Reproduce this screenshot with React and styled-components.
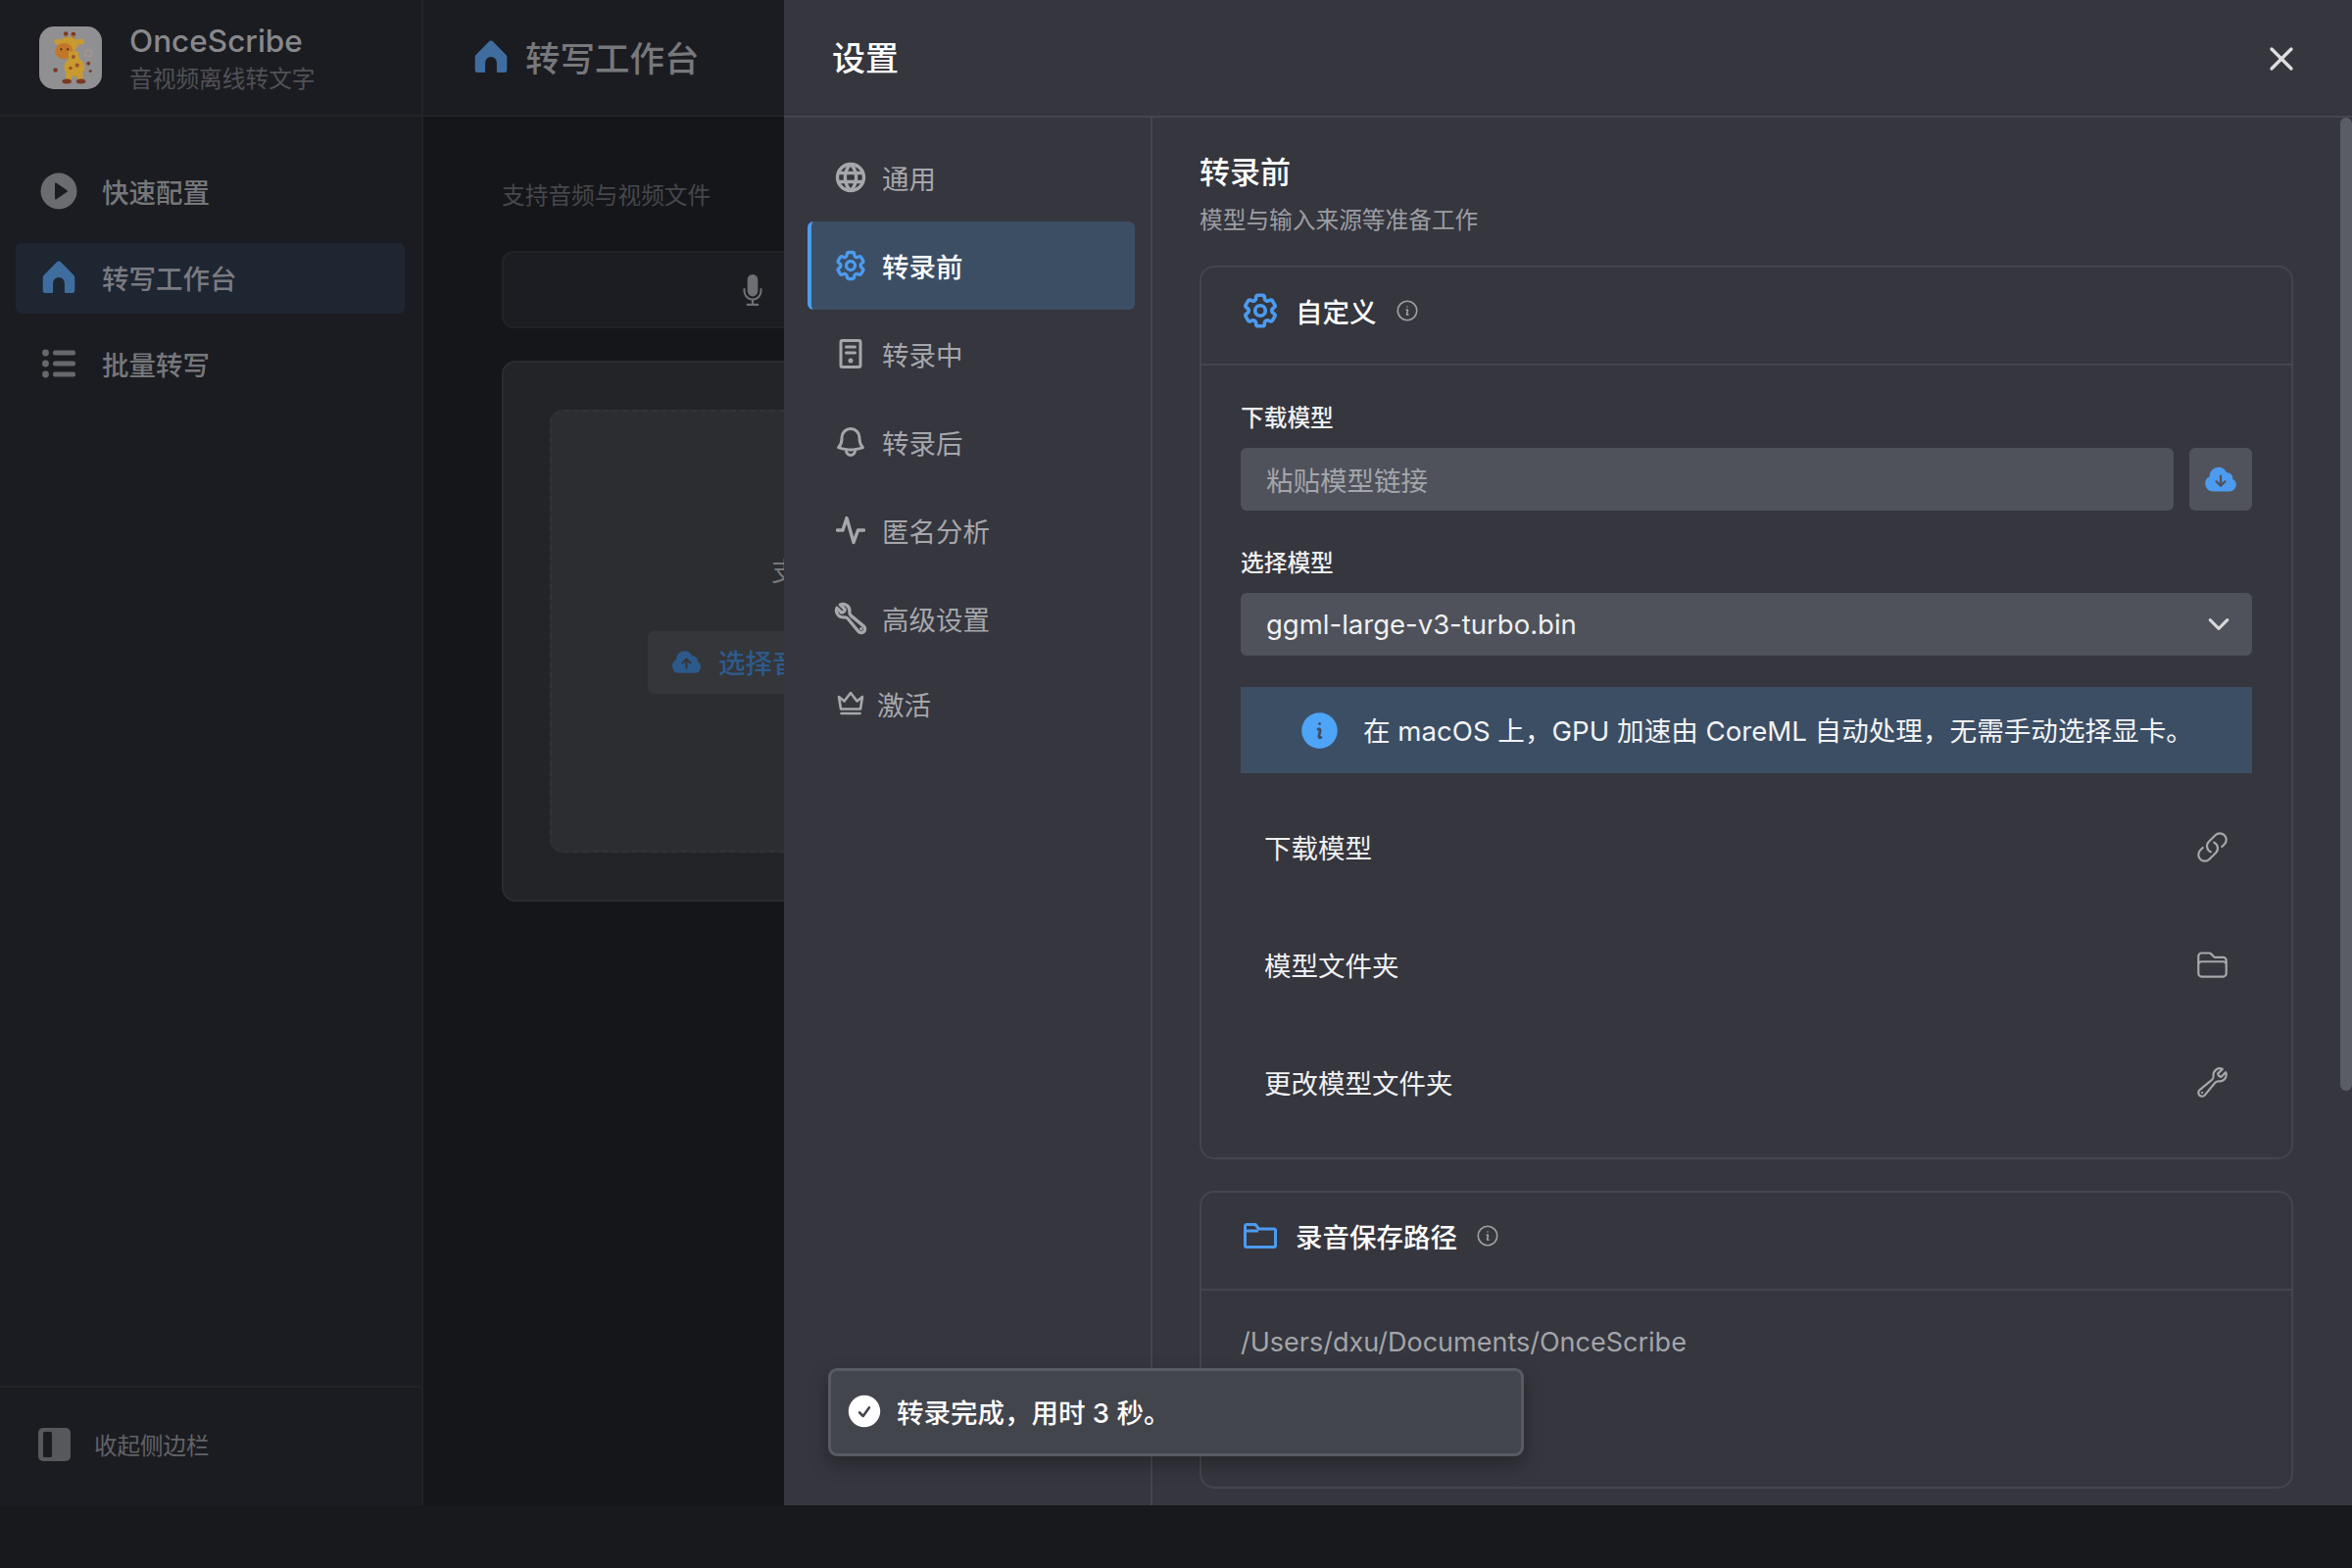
import styled, { createGlobalStyle } from "styled-components";
import { HiOutlineCog6Tooth, HiOutlineBell, HiOutlineWrench, HiOutlineLink, HiOutlineFolder, HiOutlineInformationCircle, HiMicrophone, HiCloudArrowDown, HiCloudArrowUp, HiCheckCircle, HiInformationCircle, HiChevronDown } from "react-icons/hi2";
import { LuX } from "react-icons/lu";
import { PiGlobeBold } from "react-icons/pi";

const GlobalStyle = createGlobalStyle`
  html, body { margin: 0; padding: 0; background: #17191c; }
  body { font-family: Inter, "Noto Sans CJK SC", sans-serif; }
  * { box-sizing: border-box; }
`;

const Page = styled.div`
  position: relative;
  width: 2400px;
  height: 1600px;
  overflow: hidden;
  background: #17191c;
`;

const AppWindow = styled.div`
  display: flex;
  height: 1536px;
`;

const Sidebar = styled.aside`
  width: 432px;
  flex: none;
  display: flex;
  flex-direction: column;
  background: #1b1c21;
  border-right: 2px solid #222327;
`;

const Brand = styled.div`
  height: 119px;
  flex: none;
  display: flex;
  align-items: center;
  gap: 28px;
  padding: 0 0 0 40px;
  border-bottom: 2px solid #222327;
`;

const Logo = styled.div`
  width: 64px;
  height: 64px;
  border-radius: 15px;
  background: #909093;
  display: flex;
  align-items: center;
  justify-content: center;
`;

const BrandText = styled.div`
  padding-top: 2px;
`;

const BrandName = styled.div`
  font-size: 31.5px;
  line-height: 38px;
  font-weight: 500;
  color: #87888c;
`;

const BrandSub = styled.div`
  font-size: 23.7px;
  line-height: 32px;
  margin-top: 4px;
  color: #505156;
`;

const SideNav = styled.nav`
  flex: 1;
  padding: 41px 17px 0 16px;
  display: flex;
  flex-direction: column;
  gap: 16px;
`;

const SideItem = styled.div`
  height: 72px;
  display: flex;
  align-items: center;
  gap: 25px;
  padding: 0 0 2px 25px;
  border-radius: 6px;
  background: ${(p) => (p.$active ? "#1e2632" : "transparent")};
  color: ${(p) => (p.$active ? "#7a7b80" : "#76777b")};
  font-size: 27.5px;
  font-weight: 500;
`;

const SideIcon = styled.span`
  width: 38px;
  flex: none;
  display: flex;
  justify-content: center;
`;

const SideFoot = styled.div`
  height: 122px;
  flex: none;
  display: flex;
  align-items: center;
  gap: 24px;
  padding: 0 0 5px 39px;
  font-size: 23.5px;
  color: #626367;
  border-top: 2px solid #222327;
`;

const Main = styled.main`
  flex: 1;
  min-width: 0;
  background: #15161a;
`;

const MainHeader = styled.header`
  height: 119px;
  display: flex;
  align-items: center;
  gap: 18px;
  padding: 0 0 2px 52px;
  background: #1b1c21;
  border-bottom: 2px solid #222327;
  font-size: 35.5px;
  font-weight: 500;
  color: #77787c;
`;

const MainBody = styled.div`
  padding: 64px 0 0 80px;
`;

const Hint = styled.div`
  font-size: 23.7px;
  line-height: 34px;
  color: #46474b;
`;

const PromptBox = styled.div`
  margin-top: 39px;
  width: 1200px;
  height: 79px;
  display: flex;
  align-items: center;
  padding-left: 237px;
  border: 2px solid #222327;
  border-radius: 12px;
  background: #1c1d22;
  color: #6e6f73;
`;

const DropCard = styled.div`
  margin-top: 33px;
  width: 1200px;
  height: 552px;
  padding: 48px 0 0 47px;
  border: 2px solid #2a2b2f;
  border-radius: 14px;
  background: #222427;
`;

const DropArea = styled.div`
  height: 452px;
  padding: 146px 0 0 98px;
  border: 2px dashed #323337;
  border-radius: 14px;
  background: #2c2d31;
`;

const DropText = styled.div`
  padding-left: 126px;
  font-size: 27.5px;
  line-height: 34px;
  color: #77787c;
`;

const PickButton = styled.div`
  margin-top: 44px;
  width: 400px;
  height: 64px;
  display: flex;
  align-items: center;
  gap: 16px;
  padding: 0 0 2px 23px;
  border-radius: 6px;
  background: #353639;
  font-size: 27.5px;
  font-weight: 500;
  color: #2d5a8c;
`;

const Modal = styled.section`
  position: absolute;
  top: 0;
  left: 800px;
  width: 1600px;
  height: 1536px;
  display: flex;
  flex-direction: column;
  background: #35363e;
  overflow: hidden;
`;

const ModalHeader = styled.header`
  height: 120px;
  flex: none;
  display: flex;
  align-items: center;
  justify-content: space-between;
  padding: 0 52px 0 49px;
  border-bottom: 2px solid #45464d;
`;

const ModalTitle = styled.h1`
  margin: 0 0 3px;
  font-size: 34px;
  font-weight: 500;
  color: #ffffff;
`;

const CloseButton = styled.div`
  display: flex;
  margin-top: 2px;
  color: #dedee0;
`;

const ModalBody = styled.div`
  flex: 1;
  display: flex;
  min-height: 0;
`;

const SettingsNav = styled.nav`
  width: 376px;
  flex: none;
  display: flex;
  flex-direction: column;
  padding: 16px 16px 0 24px;
  border-right: 2px solid #45464d;
`;

const SettingsItem = styled.div`
  height: ${(p) => p.$h || 90}px;
  flex: none;
  display: flex;
  align-items: center;
  gap: ${(p) => p.$gap || 17}px;
  padding-left: ${(p) => (p.$active ? 25 : 29)}px;
  border-left: ${(p) => (p.$active ? "4px solid #4c9bef" : "none")};
  border-radius: 6px;
  background: ${(p) => (p.$active ? "#3c4e64" : "transparent")};
  color: ${(p) => (p.$active ? "#ffffff" : "#a6a7ab")};
  font-size: 27.5px;
  font-weight: ${(p) => (p.$active ? 500 : 400)};
`;

const NavIcon = styled.span`
  width: 30px;
  height: 30px;
  flex: none;
  display: flex;
  align-items: center;
  justify-content: center;
  color: ${(p) => (p.$active ? "#4c9bef" : "#a6a7ab")};
  svg { flex: none; }
`;

const FlippedWrench = styled(HiOutlineWrench)`
  transform: scaleX(-1);
`;

const Content = styled.div`
  flex: 1;
  min-width: 0;
  padding: 33px 60px 0 48px;
  overflow: hidden;
`;

const ContentTitle = styled.h2`
  margin: 0;
  font-size: 31px;
  line-height: 46px;
  font-weight: 500;
  color: #ffffff;
`;

const ContentSub = styled.p`
  margin: 9px 0 0;
  font-size: 23.7px;
  line-height: 34px;
  color: #9d9ea3;
`;

const Card = styled.div`
  margin-top: ${(p) => p.$mt}px;
  height: ${(p) => p.$h}px;
  border: 2px solid #45464d;
  border-radius: 15px;
`;

const CardHeader = styled.div`
  height: 100px;
  display: flex;
  align-items: center;
  gap: 19px;
  padding: 0 0 10px 43px;
  border-bottom: 2px solid #45464d;
  font-size: 27.5px;
  font-weight: 500;
  color: #ffffff;
`;

const CardIcon = styled.span`
  display: flex;
  width: 34px;
  justify-content: center;
  color: #4c9bef;
  svg { flex: none; }
`;

const InfoHint = styled.span`
  display: flex;
  margin-left: -1px;
  color: #a0a1a6;
`;

const CardBody = styled.div`
  padding: 37px 40px 0 40px;
`;

const FieldLabel = styled.div`
  font-size: 23.7px;
  line-height: 34px;
  font-weight: 500;
  color: #f0f0f2;
  margin-top: ${(p) => p.$mt || 0}px;
`;

const FieldRow = styled.div`
  display: flex;
  gap: 16px;
  margin-top: 13px;
`;

const TextInput = styled.div`
  flex: 1;
  height: 64px;
  display: flex;
  align-items: center;
  padding-left: 26px;
  border-radius: 6px;
  background: #4f525a;
  font-size: 27.5px;
  color: #a3a5aa;
`;

const IconButton = styled.div`
  width: 64px;
  height: 64px;
  display: flex;
  align-items: center;
  justify-content: center;
  border-radius: 6px;
  background: #50535b;
  color: #4c9bef;
`;

const SelectBox = styled.div`
  height: 64px;
  margin-top: 13px;
  display: flex;
  align-items: center;
  justify-content: space-between;
  padding: 0 20px 0 26px;
  border-radius: 6px;
  background: #4f525a;
  font-size: 27.5px;
  color: #f0f0f2;
  svg { color: #d8d9db; }
`;

const Notice = styled.div`
  height: 88px;
  margin-top: 32px;
  display: flex;
  align-items: center;
  gap: 22px;
  padding-left: 58px;
  background: #3c4e64;
  font-size: 27.6px;
  color: #f2f3f5;
  svg { color: #4ea4f7; flex: none; }
`;

const NoticeText = styled.span`
  margin-bottom: 2px;
`;

const ActionList = styled.div`
  margin-top: 15px;
`;

const ActionRow = styled.div`
  height: 120px;
  display: flex;
  align-items: center;
  justify-content: space-between;
  padding: 0 23px 0 24px;
  font-size: 27.5px;
  color: #f0f0f2;
  svg { color: #a6a7ab; }
`;

const PathText = styled.div`
  padding: 35px 0 0 40px;
  font-size: 27px;
  line-height: 36px;
  color: #a3a5aa;
`;

const ScrollThumb = styled.div`
  position: absolute;
  top: 120px;
  right: 0;
  width: 12px;
  height: 993px;
  border-radius: 6px;
  background: #5a5d66;
`;

const Toast = styled.div`
  position: absolute;
  left: 845px;
  top: 1396px;
  width: 710px;
  height: 90px;
  display: flex;
  align-items: center;
  gap: 13px;
  padding: 0 0 2px 14px;
  border: 3px solid #595b63;
  border-radius: 9px;
  background: #43454d;
  box-shadow: 0 8px 20px rgba(0, 0, 0, 0.28);
  font-size: 27.5px;
  font-weight: 500;
  color: #ffffff;
  svg { flex: none; color: #ffffff; }
`;

const Giraffe = () => (
  <svg width="50" height="56" viewBox="0 0 52 58">
    <circle cx="21" cy="3.5" r="2.4" fill="#7a3a22" />
    <circle cx="29" cy="4" r="2.4" fill="#7a3a22" />
    <path d="M21 5v7M29 5v7" stroke="#a9702a" strokeWidth="2.4" />
    <ellipse cx="13" cy="12" rx="4.5" ry="3" fill="#c89a2f" />
    <ellipse cx="36" cy="12" rx="4.5" ry="3" fill="#c89a2f" />
    <ellipse cx="24" cy="15" rx="10" ry="8" fill="#c89a2f" />
    <ellipse cx="19" cy="22" rx="9.5" ry="8.5" fill="#c2762a" />
    <path d="M24 22 h10 l2 14 h-12z" fill="#c89a2f" />
    <ellipse cx="30" cy="39" rx="11" ry="10" fill="#c89a2f" />
    <rect x="21" y="44" width="6" height="11" rx="2.5" fill="#c89a2f" />
    <rect x="33" y="44" width="6" height="11" rx="2.5" fill="#c89a2f" />
    <ellipse cx="22" cy="54" rx="5" ry="2.6" fill="#7a3a22" />
    <ellipse cx="37" cy="54" rx="5" ry="2.6" fill="#7a3a22" />
    <circle cx="29" cy="28" r="2" fill="#96542a" />
    <circle cx="33" cy="37" r="2.2" fill="#96542a" />
    <circle cx="26" cy="40" r="1.8" fill="#96542a" />
    <circle cx="10" cy="42" r="2.4" fill="#7a3a22" />
    <circle cx="45" cy="35" r="2" fill="#7a3a22" />
    <circle cx="47" cy="43" r="1.6" fill="#7a3a22" />
    <circle cx="45" cy="24" r="3.5" fill="none" stroke="#a89a84" strokeWidth="1.4" />
    <circle cx="16" cy="20" r="1.1" fill="#3a2a1c" />
    <circle cx="23" cy="20" r="1.1" fill="#3a2a1c" />
  </svg>
);

const HomeIcon = ({ size, color }) => (
  <svg width={size} height={size} viewBox="0 0 34 34" fill={color}>
    <path fillRule="evenodd" d="M14.8 1.6a3 3 0 0 1 4.4 0L32.4 15a3 3 0 0 1 .9 2.1v13.4a2.5 2.5 0 0 1-2.5 2.5h-6.6a1.3 1.3 0 0 1-1.3-1.3V23a5.9 5.9 0 0 0-11.8 0v8.7A1.3 1.3 0 0 1 9.8 33H3.2a2.5 2.5 0 0 1-2.5-2.5V17.1a3 3 0 0 1 .9-2.1z" />
  </svg>
);

const PlayIcon = () => (
  <svg width="38" height="38" viewBox="0 0 38 38">
    <circle cx="19" cy="19" r="18.5" fill="#6b6c70" />
    <path d="M15 11.5a1 1 0 0 1 1.6-.8l11 7.5a1 1 0 0 1 0 1.6l-11 7.5a1 1 0 0 1-1.6-.8z" fill="#1b1c21" />
  </svg>
);

const ListIcon = () => (
  <svg width="34" height="30" viewBox="0 0 34 30" fill="#67686c">
    <circle cx="3.5" cy="4" r="3.4" />
    <circle cx="3.5" cy="15" r="3.4" />
    <circle cx="3.5" cy="26" r="3.4" />
    <rect x="11" y="1.5" width="23" height="5" rx="2" />
    <rect x="11" y="12.5" width="23" height="5" rx="2" />
    <rect x="11" y="23.5" width="23" height="5" rx="2" />
  </svg>
);

const CollapseIcon = () => (
  <svg width="33" height="34" viewBox="0 0 33 34">
    <rect width="33" height="34" rx="5" fill="#57585c" />
    <rect x="5" y="4" width="9" height="26" rx="1.5" fill="#1b1c21" />
  </svg>
);

const ServerIcon = () => (
  <svg width="30" height="30" viewBox="0 0 30 30" fill="none" stroke="currentColor" strokeWidth="3" strokeLinecap="round" strokeLinejoin="round">
    <rect x="5" y="1.5" width="20" height="27" rx="1.5" />
    <path d="M10.5 8h9M10.5 14h9" />
    <circle cx="15" cy="22" r="1" fill="currentColor" />
  </svg>
);

const PulseIcon = () => (
  <svg width="30" height="30" viewBox="0 0 30 30" fill="none" stroke="currentColor" strokeWidth="3.4" strokeLinecap="round" strokeLinejoin="round">
    <path d="M1.5 15H7l4-12.5L18 27.5 22.5 15H28.5" />
  </svg>
);

const CrownIcon = () => (
  <svg width="28" height="28" viewBox="0 0 28 28" fill="none" stroke="currentColor" strokeWidth="2.6" strokeLinecap="round" strokeLinejoin="round">
    <path d="M2 7l5.5 4.5L14 3l6.5 8.5L26 7l-2 12.5H4z" />
    <path d="M4.5 24h19" />
  </svg>
);

const CardFolderIcon = () => (
  <svg width="34" height="26" viewBox="0 0 34 26" fill="none" stroke="currentColor" strokeWidth="3" strokeLinejoin="round">
    <path d="M3 1.5h9l3.5 4.5H31A1.5 1.5 0 0 1 32.500 7.500V23A1.5 1.5 0 0 1 31 24.500H3A1.5 1.5 0 0 1 1.5 23V3A1.5 1.500 0 0 1 3 1.5z" />
    <path d="M1.5 8H15" />
  </svg>
);

const navItems = [
  { label: "通用", icon: <PiGlobeBold size={36} /> },
  { label: "转录前", icon: <HiOutlineCog6Tooth size={36} strokeWidth={2.2} />, active: true },
  { label: "转录中", icon: <ServerIcon /> },
  { label: "转录后", icon: <HiOutlineBell size={36} strokeWidth={2} /> },
  { label: "匿名分析", icon: <PulseIcon /> },
  { label: "高级设置", icon: <FlippedWrench size={36} strokeWidth={2.2} /> },
  { label: "激活", icon: <CrownIcon />, gap: 12, h: 84 },
];

export default function App() {
  return (
    <>
      <GlobalStyle />
      <Page>
        <AppWindow>
          <Sidebar>
            <Brand>
              <Logo><Giraffe /></Logo>
              <BrandText>
                <BrandName>OnceScribe</BrandName>
                <BrandSub>音视频离线转文字</BrandSub>
              </BrandText>
            </Brand>
            <SideNav>
              <SideItem><SideIcon><PlayIcon /></SideIcon>快速配置</SideItem>
              <SideItem $active><SideIcon><HomeIcon size={34} color="#3f6d9f" /></SideIcon>转写工作台</SideItem>
              <SideItem><SideIcon><ListIcon /></SideIcon>批量转写</SideItem>
            </SideNav>
            <SideFoot><CollapseIcon />收起侧边栏</SideFoot>
          </Sidebar>
          <Main>
            <MainHeader><HomeIcon size={34} color="#3f6d9f" />转写工作台</MainHeader>
            <MainBody>
              <Hint>支持音频与视频文件</Hint>
              <PromptBox><HiMicrophone size={34} /></PromptBox>
              <DropCard>
                <DropArea>
                  <DropText>支持音频与视频文件</DropText>
                  <PickButton><HiCloudArrowUp size={33} color="#2d5a8c" />选择音频</PickButton>
                </DropArea>
              </DropCard>
            </MainBody>
          </Main>
        </AppWindow>

        <Modal>
          <ModalHeader>
            <ModalTitle>设置</ModalTitle>
            <CloseButton><LuX size={40} strokeWidth={2} /></CloseButton>
          </ModalHeader>
          <ModalBody>
            <SettingsNav>
              {navItems.map((item) => (
                <SettingsItem key={item.label} $active={item.active} $gap={item.gap} $h={item.h}>
                  <NavIcon $active={item.active}>{item.icon}</NavIcon>
                  {item.label}
                </SettingsItem>
              ))}
            </SettingsNav>
            <Content>
              <ContentTitle>转录前</ContentTitle>
              <ContentSub>模型与输入来源等准备工作</ContentSub>
              <Card $mt={29} $h={912}>
                <CardHeader>
                  <CardIcon><HiOutlineCog6Tooth size={42} strokeWidth={2.1} /></CardIcon>
                  自定义
                  <InfoHint><HiOutlineInformationCircle size={26} /></InfoHint>
                </CardHeader>
                <CardBody>
                  <FieldLabel>下载模型</FieldLabel>
                  <FieldRow>
                    <TextInput>粘贴模型链接</TextInput>
                    <IconButton><HiCloudArrowDown size={36} /></IconButton>
                  </FieldRow>
                  <FieldLabel $mt={37}>选择模型</FieldLabel>
                  <SelectBox>
                    ggml-large-v3-turbo.bin
                    <HiChevronDown size={28} strokeWidth={1.2} />
                  </SelectBox>
                  <Notice>
                    <HiInformationCircle size={45} />
                    <NoticeText>在 macOS 上，GPU 加速由 CoreML 自动处理，无需手动选择显卡。</NoticeText>
                  </Notice>
                  <ActionList>
                    <ActionRow>下载模型<HiOutlineLink size={35} /></ActionRow>
                    <ActionRow>模型文件夹<HiOutlineFolder size={35} /></ActionRow>
                    <ActionRow>更改模型文件夹<HiOutlineWrench size={35} /></ActionRow>
                  </ActionList>
                </CardBody>
              </Card>
              <Card $mt={32} $h={304}>
                <CardHeader>
                  <CardIcon><CardFolderIcon /></CardIcon>
                  录音保存路径
                  <InfoHint><HiOutlineInformationCircle size={26} /></InfoHint>
                </CardHeader>
                <PathText>/Users/dxu/Documents/OnceScribe</PathText>
              </Card>
            </Content>
          </ModalBody>
          <ScrollThumb />
        </Modal>

        <Toast>
          <HiCheckCircle size={40} />
          转录完成，用时 3 秒。
        </Toast>
      </Page>
    </>
  );
}
